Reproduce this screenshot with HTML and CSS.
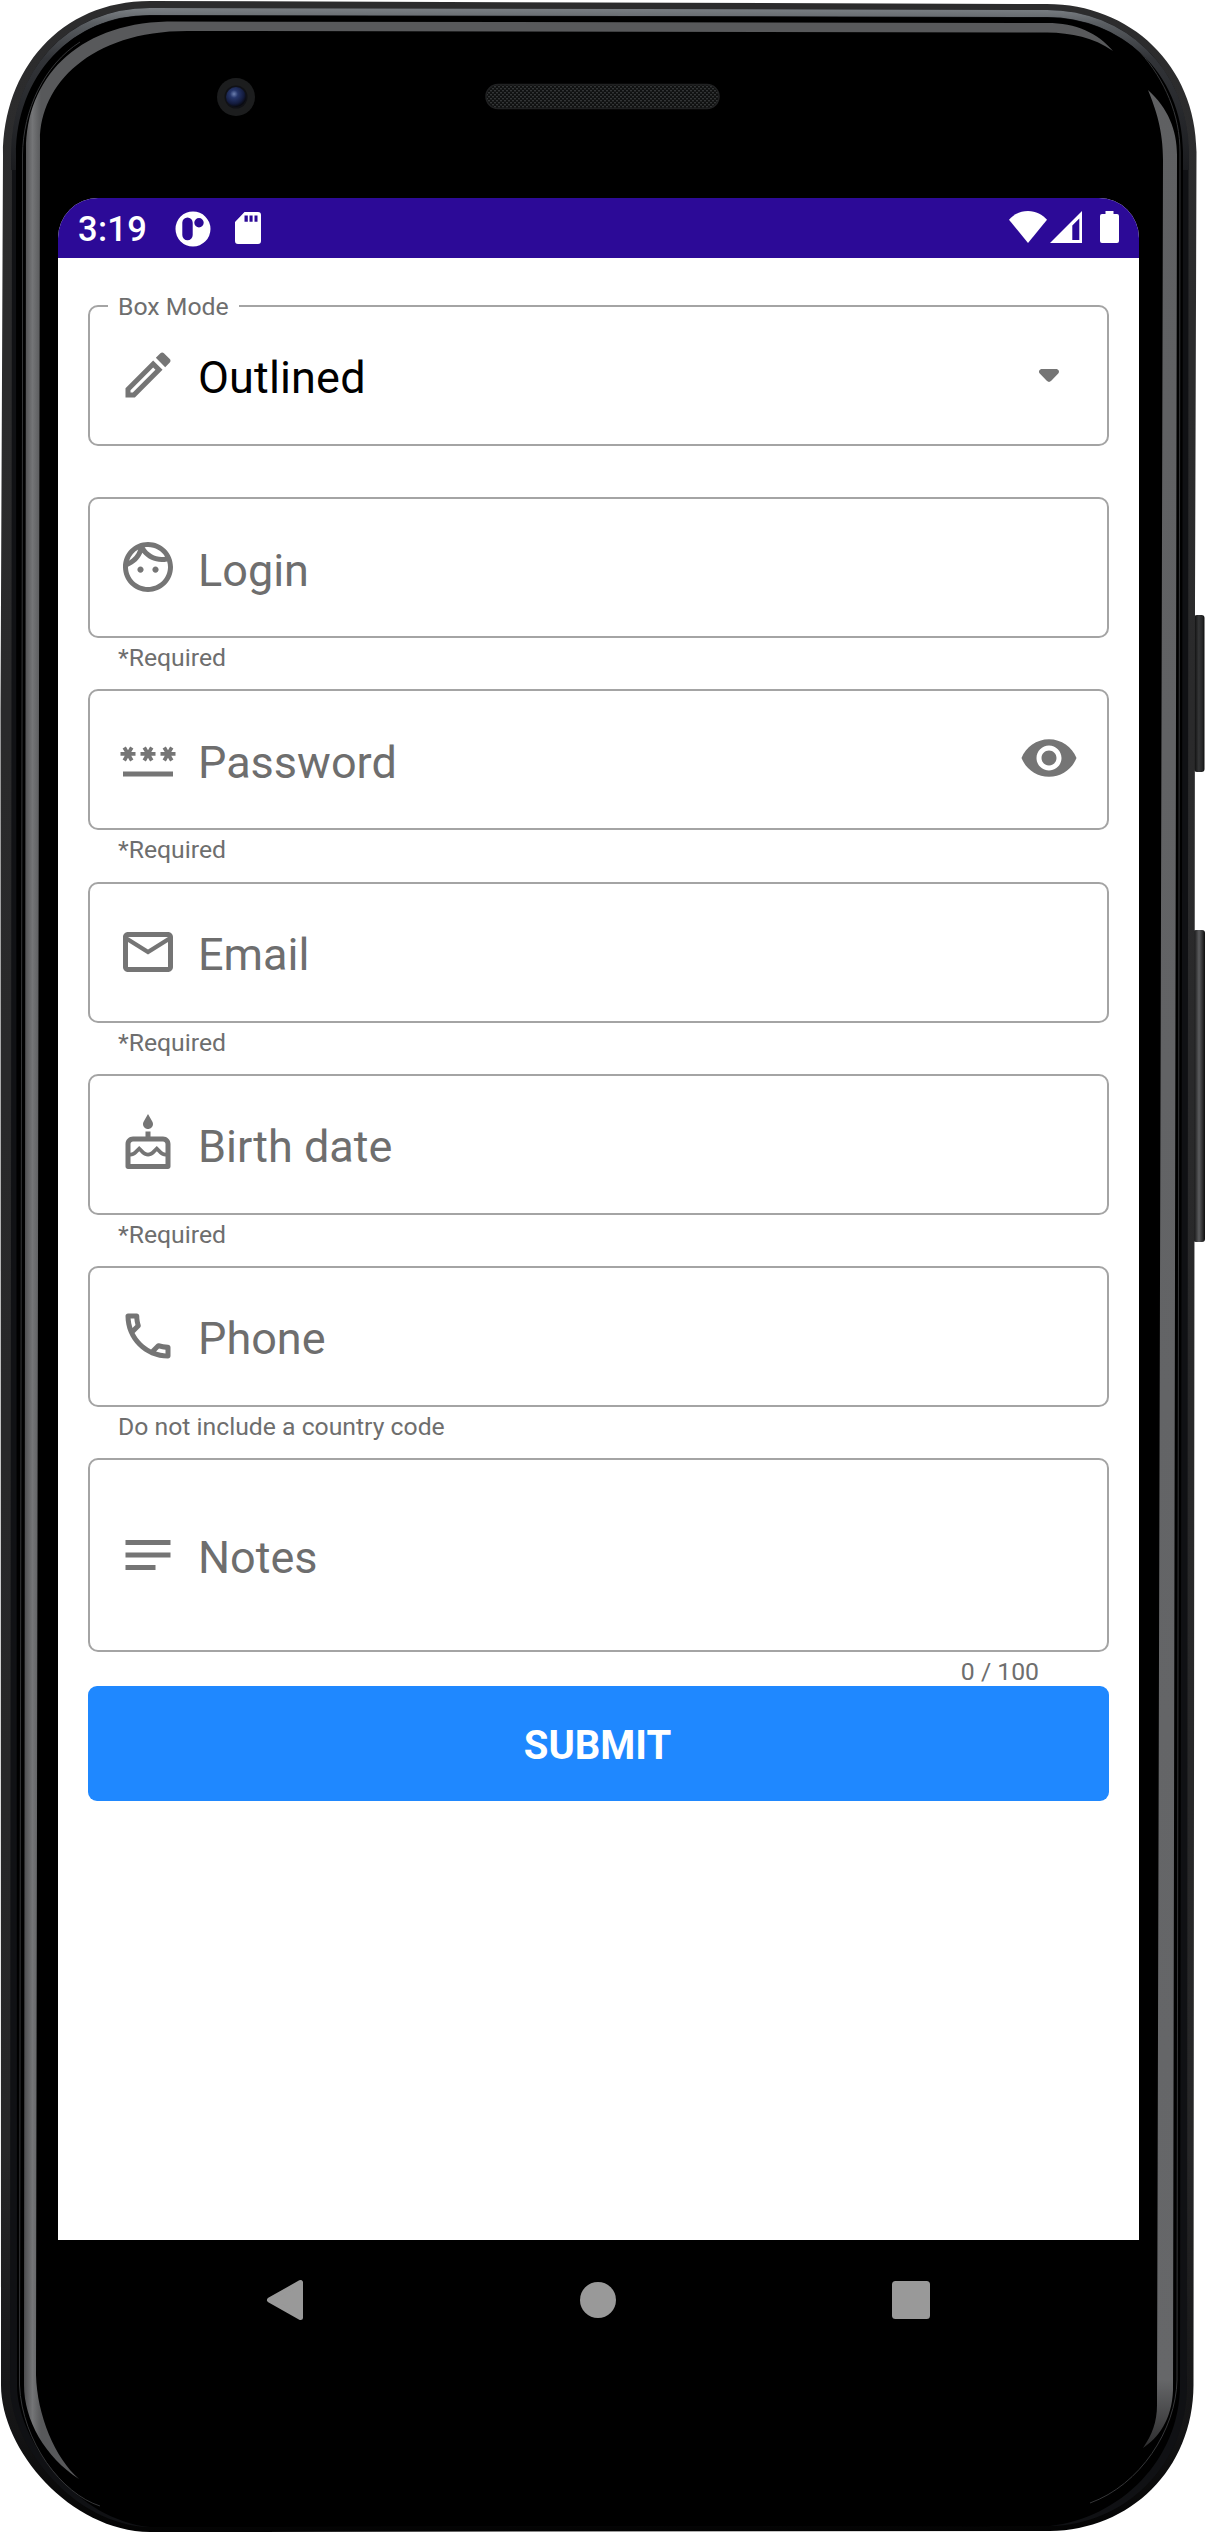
FILE: index.html
```html
<!DOCTYPE html>
<html lang="en">
<head>
<meta charset="utf-8">
<title>Sign up form</title>
<link rel="stylesheet" href="styles.css">
</head>
<body>
<div class="device">
  <svg class="chassis" viewBox="0 0 1206 2533" aria-hidden="true">
    <defs>
      <linearGradient id="body" x1="0" y1="0" x2="0" y2="1">
        <stop offset="0" stop-color="#2c2c2d"/><stop offset=".85" stop-color="#262627"/><stop offset=".96" stop-color="#141415"/><stop offset="1" stop-color="#030303"/>
      </linearGradient>
      <linearGradient id="rim" gradientUnits="userSpaceOnUse" x1="0" y1="6" x2="0" y2="180">
        <stop offset="0" stop-color="#7f8489"/><stop offset=".1" stop-color="#5a5e62"/><stop offset=".3" stop-color="#323438"/><stop offset="1" stop-color="#191a1d"/>
      </linearGradient>
      <linearGradient id="glossLeft" gradientUnits="userSpaceOnUse" x1="24" y1="0" x2="41" y2="0">
        <stop offset="0" stop-color="#4c4c4e"/><stop offset=".5" stop-color="#747577"/><stop offset="1" stop-color="#58595b"/>
      </linearGradient>
      <linearGradient id="glossRight" gradientUnits="userSpaceOnUse" x1="0" y1="90" x2="0" y2="2450">
        <stop offset="0" stop-color="#5f6062"/><stop offset=".97" stop-color="#666769"/><stop offset="1" stop-color="#2b2b2c"/>
      </linearGradient>
      <linearGradient id="key" x1="0" y1="0" x2="1" y2="0">
        <stop offset="0" stop-color="#0b0b0b"/><stop offset=".45" stop-color="#343536"/><stop offset=".8" stop-color="#242526"/><stop offset="1" stop-color="#0d0d0d"/>
      </linearGradient>
      <linearGradient id="keyLit" x1="0" y1="0" x2="1" y2="0">
        <stop offset="0" stop-color="#080808"/><stop offset=".5" stop-color="#5b5c5e"/><stop offset=".8" stop-color="#2d2d2e"/><stop offset="1" stop-color="#0d0d0d"/>
      </linearGradient>
      <radialGradient id="lens" cx=".4" cy=".35" r=".65">
        <stop offset="0" stop-color="#6d80b0"/><stop offset=".3" stop-color="#26366b"/><stop offset=".75" stop-color="#131b3d"/><stop offset="1" stop-color="#08090f"/>
      </radialGradient>
      <pattern id="mesh" width="4" height="4" patternUnits="userSpaceOnUse">
        <rect width="4" height="4" fill="#101111"/><rect width="2" height="1.4" fill="#333536"/><rect x="2" y="2" width="2" height="1.4" fill="#333536"/>
      </pattern>
    </defs>
    <rect x="1194" y="615" width="10.5" height="157" rx="3" fill="url(#key)"/>
    <rect x="1193" y="930" width="12" height="312" rx="3" fill="url(#keyLit)"/>
    <path fill="url(#body)" d="M3 155C3 70 60 1 150 1L1047 4C1130 4 1196 65 1196.500 152L1195 600L1193.500 2385C1193 2470 1130 2530 1050 2531L150 2532C70 2531 1 2450 1 2385L.5 710Z"/>
    <path fill="#101114" d="M12 155C12 72 65 8 150 8L1047 10C1125 10 1188 68 1188.500 152L1187 2385C1187 2465 1125 2525 1050 2526L150 2527C75 2526 10 2446 10 2385Z"/>
    <path fill="none" stroke="url(#rim)" stroke-width="7" d="M14.500 170V155C14.500 74 68 11.500 150 11.500L1047 13.500C1122 13.500 1185 70 1185.500 152V170"/>
    <path fill="#000" d="M16 155C16 77 70 15.500 150 15.500L1047 17.500C1120 17.500 1183 72 1183 152L1180 2385C1180 2460 1120 2518 1050 2526L150 2527C78 2520 17 2442 17 2385Z"/>
    <path fill="none" stroke="#353638" stroke-width="1" d="M22.500 400L22.500 155C23 110 44 65 80 42M19.500 2385C22 2442 62 2494 100 2506M19.500 2385L22.500 400M1140 52C1165 80 1180 115 1180 152L1177 2380C1176 2430 1140 2485 1090 2503"/>
    <path fill="url(#glossLeft)" d="M79 2479C45 2457 24 2420 24 2385L26 150C26 80 75 24 167 21.500L1047 23C1076 23 1098 33 1113 51C1093 37 1072 33 1047 32.500L187 31C90 31 40 85 40 140L36 2375C37 2415 55 2458 79 2479Z"/>
    <path fill="url(#glossRight)" d="M1148 90C1168 108 1177 130 1177 155L1173 2390C1172 2420 1158 2438 1143 2448C1152 2435 1157 2422 1157 2405L1163 160C1163 130 1156 110 1148 90Z"/>
    <circle cx="236" cy="97" r="19" fill="#1c1d1e"/>
    <circle cx="236" cy="97" r="11.500" fill="#101116"/>
    <circle cx="236" cy="97" r="10" fill="url(#lens)"/>
    <rect x="486" y="84.500" width="233" height="24" rx="12" fill="url(#mesh)" stroke="#202122" stroke-width="1.500"/>
  </svg>

  <main class="screen">
    <header class="status">
      <span class="clock">3:19</span>
      <svg class="s-app" viewBox="0 0 36 36"><path fill="#fff" fill-rule="evenodd" d="M18 .5a17.500 17.500 0 1 0 0 35a17.500 17.500 0 0 0 0-35ZM12.500 6.500a5.200 5.200 0 0 1 5.200 5.200V24a5.200 5.200 0 0 1-10.400 0V11.700a5.200 5.200 0 0 1 5.200-5.200ZM24 7a4.700 4.700 0 1 1 0 9.400a4.700 4.700 0 0 1 0-9.400Z"/></svg>
      <svg class="s-card" viewBox="0 0 26 32"><path fill="#fff" fill-rule="evenodd" d="M9.500 0H23a3 3 0 0 1 3 3V29a3 3 0 0 1-3 3H3a3 3 0 0 1-3-3V10ZM9.500 3.500V9.700H12.800V3.500ZM14.500 3.500V9.700H17.600V3.500ZM19.500 3.500V9.700H22.500V3.500Z"/></svg>
      <svg class="s-wifi" viewBox="0 0 38 32"><path fill="#fff" d="M19 0C11 0 4.500 3.500 0 8.800L19 32L38 8.800C33.500 3.500 27 0 19 0Z"/></svg>
      <svg class="s-signal" viewBox="0 0 32 32"><path fill="#fff" fill-rule="evenodd" d="M32 0V32H0ZM29.300 7.500L22.300 14.500V29H29.300Z"/></svg>
      <svg class="s-battery" viewBox="0 0 19 32"><path fill="#fff" d="M5.500 0H13.500V3H17A2 2 0 0 1 19 5V30A2 2 0 0 1 17 32H2A2 2 0 0 1 0 30V5A2 2 0 0 1 2 3H5.500Z"/></svg>
    </header>

    <form class="form">
      <div class="field">
        <div class="box">
          <span class="legend">Box Mode</span>
          <svg class="icon" viewBox="0 0 24 24"><path d="M14.060 9.020l.92.92L5.920 19H5v-.92l9.060-9.060M17.660 3c-.25 0-.51.1-.7.29l-1.830 1.830 3.750 3.750 1.830-1.830c.39-.39.39-1.020 0-1.410l-2.340-2.340c-.2-.2-.45-.29-.71-.29zm-3.600 3.190L3 17.250V21h3.750L17.810 9.940l-3.750-3.750z"/></svg>
          <span class="value filled">Outlined</span>
          <svg class="icon" viewBox="0 0 24 24"><path d="M9.200 9.600H14.800C15.800 9.600 16.400 10.700 15.700 11.400L12.900 14.300Q12 15.200 11.100 14.300L8.300 11.400C7.600 10.700 8.200 9.600 9.200 9.600Z"/></svg>
        </div>
        <div class="helper"></div>
      </div>

      <div class="field">
        <div class="box">
          <svg class="icon" viewBox="0 0 24 24"><path d="M10.250 13c0 .69-.56 1.250-1.250 1.250S7.750 13.690 7.750 13s.56-1.250 1.250-1.250 1.250.56 1.250 1.250zM15 11.750c-.69 0-1.250.56-1.250 1.250s.56 1.250 1.250 1.250 1.250-.56 1.250-1.250-.56-1.250-1.250-1.250zm7 .25c0 5.520-4.480 10-10 10S2 17.520 2 12 6.480 2 12 2s10 4.480 10 10zM10.660 4.120C12.060 6.440 14.600 8 17.500 8c.46 0 .91-.05 1.340-.12C17.440 5.560 14.900 4 12 4c-.46 0-.91.05-1.340.12zM4.420 9.470c1.710-.97 3.030-2.550 3.660-4.440C6.370 6 5.050 7.580 4.420 9.470zM20 12c0-.78-.12-1.530-.33-2.240-.7.15-1.420.24-2.170.24-3.130 0-5.920-1.440-7.760-3.690C8.690 8.870 6.600 10.880 4 11.860c.01.04 0 .09 0 .14 0 4.410 3.590 8 8 8s8-3.590 8-8z"/></svg>
          <span class="value">Login</span>
        </div>
        <div class="helper">*Required</div>
      </div>

      <div class="field">
        <div class="box">
          <svg class="icon" viewBox="0 0 24 24"><path d="M2 17h20v2H2v-2zm1.150-4.050L4 11.470l.85 1.480 1.300-.75-.85-1.480H7v-1.500H5.300l.85-1.470L4.850 7 4 8.470 3.150 7l-1.300.75.85 1.470H1v1.500h1.700l-.85 1.480 1.300.75zm6.700-.75l1.300.75.85-1.480.85 1.480 1.300-.75-.85-1.480H15v-1.500h-1.700l.85-1.470-1.300-.75L12 8.470 11.150 7l-1.300.75.85 1.470H9v1.500h1.700l-.85 1.480zM23 9.220h-1.700l.85-1.470-1.300-.75L20 8.470 19.150 7l-1.300.75.85 1.470H17v1.500h1.700l-.85 1.480 1.300.75.85-1.480.85 1.480 1.300-.75-.85-1.480H23v-1.500z"/></svg>
          <span class="value">Password</span>
          <svg class="icon eye" viewBox="0 0 24 24"><path d="M12 4.500C7 4.500 2.730 7.610 1 12c1.730 4.390 6 7.500 11 7.500s9.270-3.110 11-7.500c-1.730-4.390-6-7.500-11-7.500zM12 17c-2.760 0-5-2.240-5-5s2.240-5 5-5 5 2.240 5 5-2.240 5-5 5zm0-8c-1.660 0-3 1.340-3 3s1.340 3 3 3 3-1.340 3-3-1.340-3-3-3z"/></svg>
        </div>
        <div class="helper">*Required</div>
      </div>

      <div class="field">
        <div class="box">
          <svg class="icon" viewBox="0 0 24 24"><path d="M22 6c0-1.100-.9-2-2-2H4c-1.100 0-2 .9-2 2v12c0 1.100.9 2 2 2h16c1.100 0 2-.9 2-2V6zm-2 0l-8 5-8-5h16zm0 12H4V8l8 5 8-5v10z"/></svg>
          <span class="value">Email</span>
        </div>
        <div class="helper">*Required</div>
      </div>

      <div class="field">
        <div class="box">
          <svg class="icon" viewBox="0 0 24 24"><path d="M12 6c1.110 0 2-.9 2-2 0-.38-.1-.73-.29-1.030L12 0l-1.710 2.970c-.19.3-.29.65-.29 1.030 0 1.100.9 2 2 2zm6 3h-5V7h-2v2H6c-1.660 0-3 1.340-3 3v9c0 .55.45 1 1 1h16c.55 0 1-.45 1-1v-9c0-1.660-1.340-3-3-3zm1 11H5v-3c.9-.01 1.760-.37 2.400-1.010l1.090-1.070 1.070 1.070c1.310 1.310 3.590 1.300 4.890 0l1.080-1.070 1.070 1.070c.64.64 1.500 1 2.400 1.010v3zm0-4.500c-.51-.01-.99-.2-1.350-.57l-2.130-2.130-2.140 2.130c-.74.74-2.030.74-2.770 0L8.480 12.800l-2.140 2.130c-.35.36-.83.56-1.340.57V12c0-.55.45-1 1-1h12c.55 0 1 .45 1 1v3.500z"/></svg>
          <span class="value">Birth date</span>
        </div>
        <div class="helper">*Required</div>
      </div>

      <div class="field">
        <div class="box">
          <svg class="icon" viewBox="0 0 24 24"><path d="M6.540 5c.06.89.21 1.760.45 2.590l-1.200 1.200c-.41-1.200-.67-2.470-.76-3.790h1.510m9.860 12.020c.85.24 1.720.39 2.600.45v1.490c-1.320-.09-2.590-.35-3.800-.75l1.200-1.190M7.500 3H4c-.55 0-1 .45-1 1 0 9.390 7.610 17 17 17 .55 0 1-.45 1-1v-3.490c0-.55-.45-1-1-1-1.240 0-2.450-.2-3.570-.57-.1-.04-.21-.05-.31-.05-.26 0-.51.1-.71.29l-2.200 2.200c-2.830-1.450-5.150-3.760-6.590-6.590l2.200-2.200c.28-.28.36-.67.25-1.020C8.700 6.450 8.500 5.250 8.500 4c0-.55-.45-1-1-1z"/></svg>
          <span class="value">Phone</span>
        </div>
        <div class="helper">Do not include a country code</div>
      </div>

      <div class="field">
        <div class="box tall">
          <svg class="icon" viewBox="0 0 24 24"><path d="M3 6H21V8H3ZM3 11H21V13H3ZM3 16H15V18H3Z"/></svg>
          <span class="value">Notes</span>
        </div>
        <div class="helper counter">0 / 100</div>
      </div>

      <button class="submit" type="button">SUBMIT</button>
    </form>

    <nav class="navbar">
      <svg viewBox="0 0 60 60"><path fill="#999" stroke="#999" stroke-width="5" stroke-linejoin="round" d="M45.500 12.500V47.500L14.500 30Z"/></svg>
      <svg viewBox="0 0 60 60"><circle cx="30" cy="30" r="18" fill="#999"/></svg>
      <svg viewBox="0 0 60 60"><rect x="11" y="11" width="38" height="38" rx="3.500" fill="#999"/></svg>
    </nav>
  </main>
</div>
</body>
</html>
```
FILE: styles.css
```css
* { box-sizing: border-box; }

body {
  margin: 0;
  background: #fff;
  font-family: Roboto, sans-serif;
}

.device {
  position: relative;
  width: 1206px;
  height: 2533px;
  padding: 198px 67px 173px 58px;
  overflow: hidden;
}

/* phone shell, drawn behind the screen */
.chassis {
  position: absolute;
  inset: 0;
  width: 100%;
  height: 100%;
}

.screen {
  position: relative;
  display: flex;
  flex-direction: column;
  width: 1081px;
  height: 2162px;
  overflow: hidden;
  background: #fff;
  border-radius: 40px 40px 0 0;
}

.status {
  display: flex;
  align-items: center;
  height: 60px;
  padding: 0 20px 2px;
  background: #2c0a97;
  color: #fff;
}

.clock {
  width: 97px;
  padding-top: 3px;
  font-size: 34.5px;
  font-weight: 500;
  letter-spacing: .3px;
  line-height: 40px;
}

.status svg { flex: none; }
.s-app { width: 36px; height: 36px; margin-top: 3px; }
.s-card { width: 26px; height: 32px; margin: 2px auto 0 24px; }
.s-wifi { width: 38px; height: 32px; }
.s-signal { width: 32px; height: 32px; margin-left: 3px; }
.s-battery { width: 19px; height: 32px; margin-left: 18px; }

.form {
  flex: 1;
  display: flex;
  flex-direction: column;
  padding: 47px 30px 0;
}

.box {
  position: relative;
  display: flex;
  align-items: center;
  gap: 20px;
  height: 141px;
  padding: 0 28px;
  border: 2px solid #a4a4a4;
  border-radius: 10px;
}

.box.tall { height: 194px; }

/* floating label sits over the outline and interrupts it */
.legend {
  position: absolute;
  top: -16px;
  left: 18px;
  padding: 0 10px;
  background: #fff;
  color: #6e6e6e;
  font-size: 24.8px;
  line-height: 32px;
}

.icon {
  flex: none;
  width: 60px;
  height: 60px;
  margin-top: -1px;
  fill: #757575;
}

.eye { margin-top: -3px; }

.value {
  flex: 1;
  padding-top: 6px;
  color: #6e6e6e;
  font-size: 45px;
  line-height: 54px;
}

.filled {
  padding-top: 4px;
  color: #000;
  letter-spacing: .15px;
}

.helper {
  height: 51.2px;
  padding: 4px 30px 0;
  color: #6e6e6e;
  font-size: 24.75px;
  line-height: 32px;
}

.counter {
  height: 34px;
  padding-right: 70px;
  text-align: right;
}

.submit {
  height: 115px;
  padding: 5px 2px 0 0;
  border: 0;
  border-radius: 9px;
  background: #1f88ff;
  color: #fff;
  font: 700 40px/48px Roboto, sans-serif;
}

.navbar {
  display: flex;
  justify-content: center;
  align-items: center;
  gap: 253px;
  height: 120px;
  padding-right: 2px;
  background: #000;
}

.navbar svg { width: 60px; height: 60px; }
```
